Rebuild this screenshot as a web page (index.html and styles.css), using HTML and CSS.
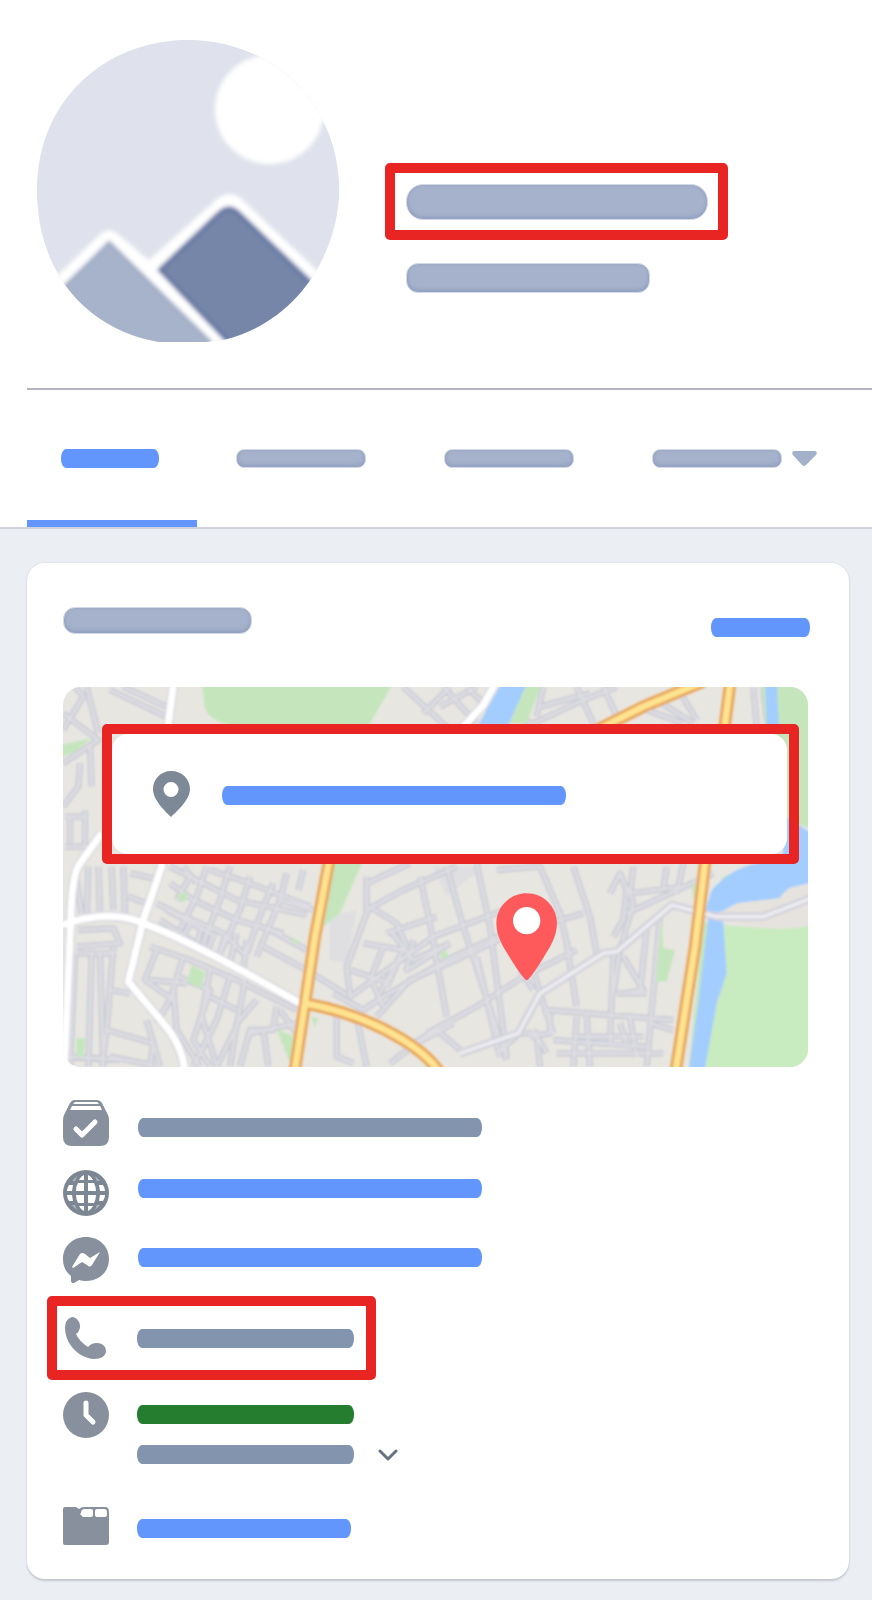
FILE: index.html
```html
<!DOCTYPE html>
<html lang="en">
<head>
<meta charset="utf-8">
<meta name="viewport" content="width=device-width, initial-scale=1">
<title>Business page</title>
<link rel="stylesheet" href="styles.css">
</head>
<body>
<header class="top">
  <div class="profile">
    <svg class="avatar" viewBox="46 56 914 914" aria-hidden="true">
      <defs>
        <clipPath id="disc"><path d="M49 500C53 245 245 62 503 58C765 62 954 250 958 510C954 700 835 905 612 960L555 967H415C200 930 49 760 49 510Z"/></clipPath>
        <filter id="soft" x="-10%" y="-10%" width="120%" height="120%"><feGaussianBlur stdDeviation="6"/></filter>
      </defs>
      <g clip-path="url(#disc)">
        <path fill="#dfe2ec" d="M0 0H1024V1024H0Z"/>
        <g filter="url(#soft)">
          <circle cx="748" cy="268" r="164" fill="#fff"/>
          <path d="M740 90L960 60V300H900Z" fill="#fff"/>
          <path d="M20 855L240 642Q265 620 292 642L385 722L590 538Q628 508 665 538L930 790L960 1020H20Z" fill="#fff"/>
          <path d="M100 830L266 667L570 965L560 1010H100Z" fill="#a7b3ca" stroke="#95a3c1" stroke-width="8"/>
          <path d="M418 750L596 580Q627 552 656 580L880 795L850 1020H675Z" fill="#7686a9" stroke="#5c70a0" stroke-width="12"/>
        </g>
      </g>
    </svg>
    <div class="identity">
      <div class="highlight name-box"><h1 class="soft-bar name" aria-label="Page name"></h1></div>
      <div class="soft-bar handle"></div>
    </div>
  </div>
  <nav class="tabs" aria-label="Sections">
    <a class="tab current" href="#home" aria-label="Home" aria-current="page"><span class="bar blue tab-active"></span></a>
    <a class="tab" href="#posts" aria-label="Posts"><span class="soft-bar tab-bar"></span></a>
    <a class="tab" href="#photos" aria-label="Photos"><span class="soft-bar tab-bar"></span></a>
    <button class="tab more" type="button" aria-label="More"><span class="soft-bar tab-bar"></span>
      <svg class="caret" viewBox="0 0 25 15" aria-hidden="true"><path d="M2 0H23Q26 1 24 4L14 14Q12 16 10 14L1 4Q-1 1 2 0Z" fill="#a3b0ca"/></svg>
    </button>
  </nav>
</header>

<main class="content">
  <section class="card">
    <div class="card-head">
      <h2 class="soft-bar card-title" aria-label="About"></h2>
      <a class="bar blue see-all" href="#about" aria-label="See all"></a>
    </div>

    <div class="map">
      <svg class="map-art" viewBox="39 51 2235 1140" preserveAspectRatio="xMidYMid slice" aria-hidden="true">
        <defs>
          <filter id="haze" x="-2%" y="-2%" width="104%" height="104%"><feGaussianBlur stdDeviation="3"/></filter>
          <path id="streets" d="M39 180L100 80L75 51M110 51L145 190M39 130L145 210L39 280M180 60L360 145M220 50L370 120M90 280L85 350L39 410M120 230L125 350M45 440H110M60 440V520M105 420V530M45 530H110M75 600L95 730M115 590L110 730M145 590L150 725M185 590L190 720M220 590L225 735M240 610L310 625M235 680L290 700
          M360 590L420 620L380 690M400 590L440 640M420 620L560 690L770 735M360 640L430 690L560 750L700 790M320 700L380 730L520 790L590 860M470 590L440 680L390 780M540 590L510 690L460 820M600 620L570 720L510 850M670 640L640 710L590 850M710 610L690 690L620 860M480 600L600 640L780 710M760 600L745 660M690 690L790 720M640 830L770 900L890 975M660 780L770 840
          M330 750L470 840M350 720L500 800M420 760L400 800M455 770L440 830M490 790L475 840M525 800L505 860M560 790L540 880M590 810L580 900
          M300 830L420 870L560 930L740 1020M320 840L285 930L370 990M400 860L360 990L320 1060M300 930L410 940M385 920L480 960L430 1110L480 1190M480 900L455 1040L500 1190M540 920L500 1050L430 1190M585 930L560 1070L500 1190M620 990L560 1060L540 1190M480 980L560 1020M680 1010L670 1080L600 1080L570 1190M600 1090L740 1060M370 960L380 1080L450 1190M640 1080L655 1190M690 1020L740 1090
          M85 780L190 775L210 820L80 830M80 850L200 850M75 850L60 1191M125 850L115 1191M150 850L160 1191M190 830L170 1080L155 1191M170 1080L310 1120L300 1190M60 1160L210 1170M180 960L240 970M290 1050L330 1190M180 1160L330 1190
          M950 620V730L890 890L900 980L1150 800L1390 710M950 640L1080 580M950 720L1060 660L1220 590M1110 620L1140 760L1190 1040M960 710L1040 760L1070 830M1010 790L1160 740M1020 780L1090 870L1200 820M1190 590L1240 770L1370 1170M1280 580L1320 770L1370 1160M1340 600L1470 590L1530 730L1560 860M940 820L1060 840L990 970M900 900L1020 940M960 920L1000 1010M1000 830L960 930M1050 860L1010 950M1090 810L1070 900L1200 820M850 970L940 1020L1000 980L1190 870L1430 760M1150 900L1390 790L1600 730M1130 1090L1280 1010L1420 920L1580 840M980 1040L1080 930L1240 860M860 1020V1160L910 1180M920 1040L950 1191M1020 1180L1100 1120L1210 1060M1070 1130L1160 1080L1230 1140M1280 860L1350 1160M1410 900L1450 960M1420 800L1470 970L1510 1090M1550 820L1580 1010M1570 590L1620 740L1640 850M1680 670L1710 610L1730 660L1720 750L1690 800M1730 650L1750 700L1710 840L1690 970M1750 590L1740 670L1900 650M1730 730L1990 610M1830 740L1790 1190M1850 590L1840 660M1900 580L1880 670M1790 780L1770 960M1720 860L1780 960L1720 970M1340 1150L1410 1090L1460 1090L1470 1191M1490 1020L1870 1050M1500 1030V1090L1440 1100M1510 1110L1790 1130M1450 1080L1490 1150M1580 1040L1570 1190M1610 1030L1620 1190M1690 860L1680 1130M1700 970H1790M1710 1060L1730 1120M1740 1040L1760 1160M1800 1060L1870 1080M1570 1100H1780M1520 1150H1840
          M1060 51L1200 180M1120 130L1200 51M1180 51L1280 160M1170 110L1280 51M1250 51L1330 130M1410 150L1450 160L1600 90L1700 51M1480 51L1460 140M1580 51L1630 160M1660 51L1710 160M1470 110L1620 70M1820 90L1930 160M1880 51L1940 150M1790 120L1900 160M2110 51L2120 170M2140 51L2150 150"/>
        </defs>
        <path fill="#e8e6e1" d="M0 0H2300V1250H0Z"/>
        <g filter="url(#haze)">
        <path fill="#dfdfe1" d="M840 740L920 720L890 880L840 870ZM1150 590H1300L1190 680Z"/>
        <use href="#streets" fill="none" stroke="#cbccd6" stroke-width="19" stroke-linejoin="round"/>
        <use href="#streets" fill="none" stroke="#dddde2" stroke-width="9"/>
        <g fill="#c5e6bd">
          <path d="M455 30H1035L955 170H550Q475 150 465 115ZM850 570H940L870 730L820 770ZM30 225L125 205L75 245L30 264ZM383 672L408 667L412 690L390 698ZM425 885L467 908L450 956L412 935ZM80 1105H107L100 1160L78 1155ZM680 1078L735 1100L720 1180ZM783 1040L805 1045L795 1072ZM720 798L748 815L735 825ZM1170 850L1190 840L1195 860L1175 868Z"/>
          <path d="M1430 30H1480L1430 160H1370ZM2180 30H2300V480L2200 450L2180 200ZM2135 30L2145 170H2165L2155 30ZM1840 835L1875 840L1850 935H1817L1835 740ZM1925 640L1950 650L1930 690ZM2020 620L2110 585L2005 680L1970 720ZM1960 750L1915 1210H1940L1985 770Z"/>
          <path d="M2020 765L2140 775L2300 755V1210H1950L2000 1000L2030 910Z" fill="#c8ebbf"/>
        </g>
        <path fill="#a3cdff" d="M1360 30H1435L1375 165H1285ZM2145 30H2180L2187 170H2150ZM2200 435L2300 500V640Q2200 650 2190 685L2060 700L2020 722L1960 740L1985 660Q2050 585 2150 575L2200 550ZM1975 740L2020 755L2030 910L2000 1000L1962 1210H1915L1945 1000Z"/>
        <path d="M2020 723L2070 698L2190 685L2215 655L2300 633V762Q2210 785 2140 772L2000 750Z" fill="#e6e3de"/>
        <path fill="none" stroke="#d1d1da" stroke-width="25" d="M1230 1150L1405 1090L1470 970L1660 850L1700 845L1865 705L2000 740H2140L2290 682"/>
        <path fill="none" stroke="#ececf1" stroke-width="11" d="M1230 1150L1405 1090L1470 970L1660 850L1700 845L1865 705L2000 740H2140L2290 682"/>
        <g fill="none" stroke-linejoin="round">
          <path stroke="#d5d6de" stroke-width="29" d="M372 30L350 200L335 590L280 750L235 935L340 1060Q400 1130 405 1210M155 490L90 580Q65 610 62 760L42 1210M30 767Q180 715 280 760Q420 810 750 1000M1342 30L1300 105L1240 170"/>
          <path stroke="#fff" stroke-width="21" d="M372 30L350 200L335 590L280 750L235 935L340 1060Q400 1130 405 1210M155 490L90 580Q65 610 62 760L42 1210M30 767Q180 715 280 760Q420 810 750 1000M1342 30L1300 105L1240 170"/>
          <path stroke="#e9a65c" stroke-width="37" d="M840 560L795 800L765 1000L733 1210M765 1000Q930 1030 1060 1110Q1140 1160 1170 1210M1630 185L1780 110L1960 35M2042 30L2020 200L1965 580L1935 830L1876 1210"/>
          <path stroke="#fee391" stroke-width="19" d="M840 560L795 800L765 1000L733 1210M765 1000Q930 1030 1060 1110Q1140 1160 1170 1210M1630 185L1780 110L1960 35M2042 30L2020 200L1965 580L1935 830L1876 1210"/>
        </g>
        </g>
        <path fill="#fe5a5b" d="M1430 670C1480 670 1521 710 1521 760C1521 800 1498 835 1482 860Q1455 905 1435 928Q1430 934 1425 928Q1405 905 1378 860C1362 835 1339 800 1339 760C1339 710 1380 670 1430 670Z"/>
        <circle cx="1430" cy="752" r="41" fill="#fff"/>
      </svg>
      <div class="highlight address-box">
        <a class="address" href="#map" aria-label="Address">
          <svg class="pin" viewBox="0 0 37 46" aria-hidden="true"><path fill="#7d8996" fill-rule="evenodd" d="M18 0C29 0 37 8 37 18C37 29 24 40 18 46C12 40 0 29 0 18C0 8 8 0 18 0ZM18 11A7 7 0 1 0 18 26A7 7 0 1 0 18 11Z"/></svg>
          <span class="bar blue wide"></span>
        </a>
      </div>
    </div>

    <ul class="details">
      <li class="row row-type">
        <svg class="icon" viewBox="0 0 46 46" aria-hidden="true"><path fill="#87909c" d="M11 0H34Q37 0 39 3L45 15Q46 17 46 20V37Q46 46 37 46H9Q0 46 0 37V20Q0 17 1 15L7 3Q9 0 11 0Z"/><path fill="#fff" d="M12 2H34L36 4H10ZM9 6H37L39 10H7Z"/><path fill="none" stroke="#fff" stroke-width="5" stroke-linecap="round" stroke-linejoin="round" d="M13 29L19 35L32 22"/></svg>
        <span class="bar slate wide"></span>
      </li>
      <li class="row row-site">
        <svg class="icon" viewBox="0 0 46 46" aria-hidden="true"><circle cx="23" cy="23" r="23" fill="#7d8793"/><g fill="#fff"><path d="M21 5V10H16Q18 6 21 5ZM25 5V10H30Q28 6 25 5ZM21 41V36H16Q18 40 21 41ZM25 41V36H30Q28 40 25 41Z"/><path d="M15 13H21V21H13Q13 16 15 13ZM25 13H31Q33 17 33 21H25ZM13 25H21V33H15Q13 29 13 25ZM25 25H33Q33 29 31 33H25Z"/><path d="M6 15H10L9 21H4Q4 18 6 15ZM40 15H36L37 21H42Q42 18 40 15ZM4 25H9L10 31H6Q4 28 4 25ZM42 25H37L36 31H40Q42 28 42 25Z"/><path opacity=".4" d="M9 11L14 6L12 11ZM37 11L32 6L34 11ZM9 35L14 40L12 35ZM37 35L32 40L34 35Z"/></g></svg>
        <a class="bar blue wide" href="#website" aria-label="Website"></a>
      </li>
      <li class="row row-chat">
        <svg class="icon" viewBox="0 0 46 46" aria-hidden="true"><path fill="#87909c" d="M23 0C36 0 46 9 46 22S36 44 23 44Q19 44 16 43L11 46Q8 46 8 44V39Q0 33 0 22C0 9 10 0 23 0Z"/><path fill="#fff" d="M9 30L17 17Q19 15 22 17L27 21L37 15L29 28Q27 31 24 28L19 25L10 31Z"/></svg>
        <a class="bar blue wide" href="#message" aria-label="Send message"></a>
      </li>
      <li class="row highlight row-phone">
        <svg class="phone" viewBox="0 0 43 43" aria-hidden="true"><path fill="#8a939f" d="M8 0C13 0 17 6 16 11Q15 15 12 17Q15 24 24 30Q27 26 33 26C38 26 42 29 42 34S37 42 30 42C14 41 1 26 1 11Q1 2 8 0Z"/></svg>
        <span class="bar slate short"></span>
      </li>
      <li class="row row-hours">
        <svg class="icon" viewBox="0 0 46 46" aria-hidden="true"><circle cx="23" cy="23" r="23" fill="#87909c"/><path fill="none" stroke="#fff" stroke-width="5" stroke-linecap="round" stroke-linejoin="round" d="M23 11V23L30 30"/></svg>
        <div class="hours">
          <span class="bar green short"></span>
          <button class="hours-toggle" type="button" aria-label="Show hours"><span class="bar slate short"></span>
            <svg class="chevron" viewBox="0 0 20 12" aria-hidden="true"><path fill="none" stroke="#68717e" stroke-width="3" stroke-linecap="round" stroke-linejoin="round" d="M2 2L10 10L18 2"/></svg>
          </button>
        </div>
      </li>
      <li class="row row-category">
        <svg class="folder" viewBox="0 0 46 38" aria-hidden="true"><path fill="#87909c" d="M2 0H13L16 2Q18 0 21 0H42Q46 0 46 5V35Q46 38 43 38H2Q0 38 0 36V2Q0 0 2 0Z"/><path fill="#fff" d="M18 6Q18 2 22 2H28Q30 2 30 4V8Q30 10 28 10H20L17 7ZM32 4Q32 2 34 2H41Q44 2 44 5V8Q44 10 42 10H34Q32 10 32 8Z"/></svg>
        <a class="bar blue category" href="#category" aria-label="Category"></a>
      </li>
    </ul>
  </section>
</main>
</body>
</html>
```
FILE: styles.css
```css
* { box-sizing: border-box; }

body {
  margin: 0;
  background: #ebeef3;
  font-family: "Liberation Sans", Arial, sans-serif;
}

h1, h2, ul { margin: 0; padding: 0; }
ul { list-style: none; }
svg { display: block; flex: none; }

button {
  padding: 0;
  border: 0;
  background: none;
  cursor: pointer;
}

/* Placeholder lines */
.bar {
  display: block;
  height: 19px;
  border-radius: 5px / 9px;
}
.blue { background: #6396fc; }
.slate { background: #8394af; }
.green { background: #257e2f; }
.wide { width: 344px; }
.short { width: 217px; }
.category { width: 214px; }

.soft-bar {
  display: block;
  border: 1px solid #d3d9e6;
  border-radius: 12px;
  background: #a6b2cb;
  box-shadow: inset 0 -2px 4px #8f9ec0, inset 0 0 3px #9aa7c4;
}

.highlight {
  border: 10px solid #e92524;
  border-radius: 5px;
}

/* Profile header */
.top {
  background: #fff;
  border-bottom: 2px solid #d0d3d9;
}
.profile {
  display: flex;
  gap: 45px;
  padding: 39px 27px 45px 36px;
}
.avatar { width: 304px; height: 304px; }
.identity { padding-top: 124px; }
.name-box { padding: 11px 10px 10px 11px; }
.name { width: 302px; height: 36px; border-radius: 17px; }
.handle { width: 244px; height: 30px; margin: 23px 0 0 21px; }

.tabs {
  display: flex;
  margin-left: 27px;
  border-top: 2px solid #b5b4c1;
}
.tab {
  display: flex;
  align-items: center;
  height: 137px;
  padding: 0 39px;
}
.current {
  padding: 0 38px 0 34px;
  box-shadow: inset 0 -7px #6396fc;
}
.more { gap: 10px; padding-right: 0; }
.tab-active { width: 98px; }
.tab-bar { width: 130px; height: 19px; border-radius: 8px; }
.caret { width: 25px; height: 15px; }

/* Details card */
.content { padding: 34px 23px 21px 27px; }
.card {
  padding: 44px 39px 34px 36px;
  background: #fff;
  border-radius: 18px;
  box-shadow: 0 2px 2px #c5c8cf, 0 0 2px #d3d6dc;
}
.card-head {
  display: flex;
  justify-content: space-between;
  margin-bottom: 50px;
}
.card-title { width: 189px; height: 27px; }
.see-all { width: 99px; margin-top: 11px; }

.map {
  position: relative;
  height: 380px;
  margin-right: 2px;
  padding: 37px 9px 0 39px;
  overflow: hidden;
  border-radius: 18px;
}
.map-art {
  position: absolute;
  inset: 0;
  width: 100%;
  height: 100%;
}
.address-box { position: relative; }
.address {
  display: flex;
  align-items: center;
  gap: 32px;
  height: 120px;
  margin-right: 2px;
  padding-left: 41px;
  background: #fff;
  border-radius: 16px;
}
.address .bar { margin-top: 3px; }
.pin { width: 37px; height: 46px; }

.details { padding-top: 33px; }
.row {
  display: flex;
  align-items: flex-start;
  gap: 28px;
}
.row .wide { margin-left: 1px; }
.icon { width: 46px; height: 46px; }
.row-type { margin-bottom: 24px; }
.row-type .bar { margin-top: 18px; }
.row-site { margin-bottom: 21px; }
.row-site .bar { margin-top: 9px; }
.row-chat { margin-bottom: 13px; }
.row-chat .bar { margin-top: 11px; }
.row-phone {
  align-items: center;
  gap: 30px;
  width: fit-content;
  height: 84px;
  margin: 0 0 12px -16px;
  padding: 0 12px 0 7px;
}
.phone { width: 43px; height: 43px; }
.hours {
  display: flex;
  flex-direction: column;
  gap: 21px;
  padding-top: 13px;
}
.hours-toggle {
  display: flex;
  align-items: center;
  gap: 24px;
}
.chevron { width: 20px; height: 12px; }
.row-category { margin-top: 43px; }
.row-category .bar { margin-top: 12px; }
.folder { width: 46px; height: 38px; }
```
